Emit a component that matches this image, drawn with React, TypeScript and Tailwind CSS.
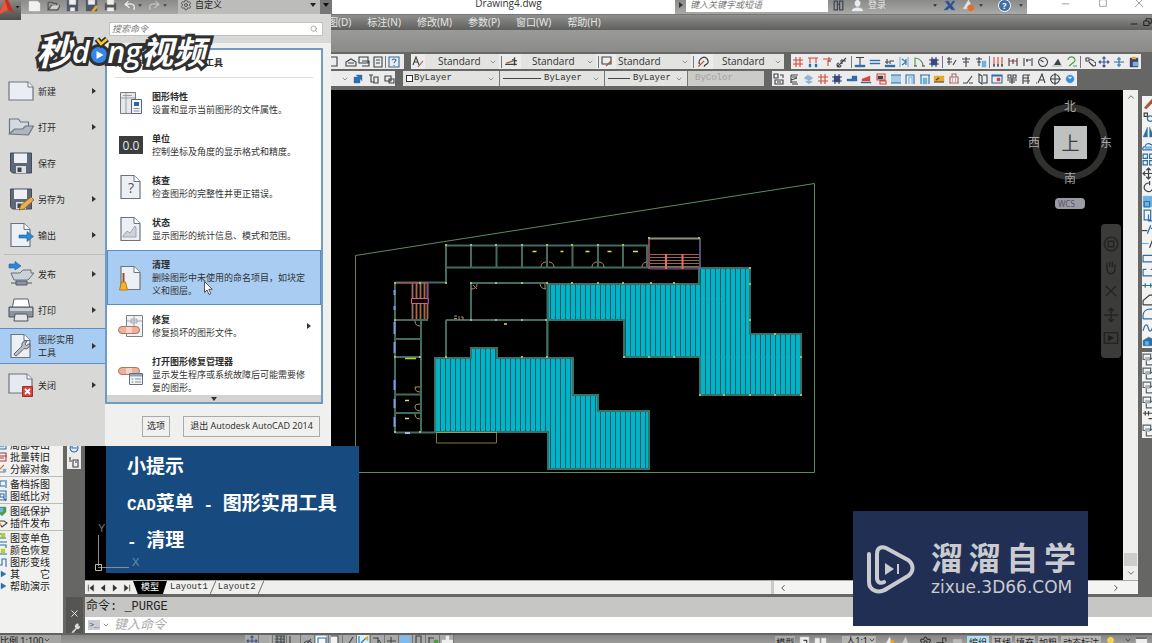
import type { ReactNode } from 'react'
import { ChevronDown, ChevronLeft, ChevronRight, ChevronUp, Search, Settings } from 'lucide-react'

type Stroke = [color: string, d: string, fill?: boolean]

const K = '#3d4348'
const R = '#d9453a'
const B = '#2d6fa8'
const S = '#6db4e4'
const G = '#4c9a4a'
const Y = '#e8a92c'

function Glyph({ strokes, className = 'size-3' }: { strokes: Stroke[]; className?: string }) {
  return (
    <svg viewBox="0 0 12 12" className={className} aria-hidden="true">
      {strokes.map(([color, d, fill], i) => (
        <path key={i} d={d} stroke={color} fill={fill ? color : 'none'} strokeWidth={fill ? 0.4 : 1.1} />
      ))}
    </svg>
  )
}

const HASH: Stroke[] = [[R, 'M4 1v10M8 1v10M1 4h10M1 8h10']]
const GRID_BLUE: Stroke[] = [['#3b4a7c', 'M3 3h6v6h-6z', true], ['#3b4a7c', 'M4 1v10M8 1v10M1 4h10M1 8h10']]
const MOVE: Stroke[] = [['#41528c', 'M6 1v10M1 6h10M4.5 2.5L6 1l1.5 1.5M4.5 9.500L6 11l1.500-1.500M2.500 4.500L1 6l1.500 1.500M9.500 4.500L11 6l-1.500 1.500']]

/* 工具栏第一行 */
const axisTools: (Stroke[] | null)[] = [
  HASH,
  [[R, 'M1 2h10M3 2v5M9 2v5'], [B, 'M2 8h2v3h-2zM8 8h2v3h-2z', true]],
  [[R, 'M1 3h9M7 1v3M6 4v6'], [K, 'M6 5h3']],
  [[K, 'M2 10L10 2M3 7a2 2 0 1 0 2 2M6 3v5M4 5h6']],
  null,
  [[K, 'M2 1.500h8M6 2v8'], [B, 'M1 9h10v2h-10z', true]],
  [[B, 'M1 4h10v1h-10zM1 7h10v1h-10z', true]],
  [[B, 'M1 9h10v2h-10z', true], [K, 'M3 8V3M6 8V5h4M1 6h4']],
  [[S, 'M2 1v10M10 1v10'], [B, 'M4 3l4 3-4 3M8 3v6']],
  [[G, 'M2 10V2a8 8 0 0 1 8 8'], [K, 'M1 10h3M9 10h3']],
  GRID_BLUE,
  null,
  [[K, 'M2 3h5M4 1v8M2 6h5M8 9l3-5']],
  [[K, 'M2 3h8M3 6h6M6 1v10']],
  [[K, 'M1 3h6M4 1v9M2 6h4'], [S, 'M7 5h4v6h-4z', true]],
  null,
  [[R, 'M2 1v7M6 1v7M10 1v7'], [K, 'M1 9h2M5 9h2M9 9h2M2 8v3M6 8v3M10 8v3']],
  [[R, 'M2 5h8'], [K, 'M2 2v8M10 2v8M6 3v5']],
  [[K, 'M2 2v8M10 2v8M4 4h5M5 3v3']],
  [[K, 'M6 1.500a4.500 4.500 0 1 0 .1 0M3.500 4l3 2']],
  [[K, 'M1 10h10M3 9l4-6 3 6M5 6h4', true]],
  [[G, 'M2 4a3.500 3 0 1 1 6 2L3 10M7 10h4']],
  null,
  [[K, 'M2 2h3v3h-3zM6 3l4 2M5 6l4 4M8 8a2 2 0 1 0 2-2']],
  MOVE,
  [[B, 'M6 1v10M1 6h10M4 3h4M4 9h4']],
  [['#4a4168', 'M2 2h8v9h-8z', true], [Y, 'M4 1h4v2h-4z', true], [S, 'M5 6h5v4h-5z', true]],
]

/* 工具栏第二行 */
const buildTools: Stroke[][] = [
  [[K, 'M1 1h4v4h-4zM2 7h8v4h-8zM7 2h3v3M4 9h4']],
  [[K, 'M3 2h7M4 4h5M3 7l6-2M3 9h6M4 11h6M3 2v8']],
  [['#8ab7d6', 'M2 5l4-3 5 3-4 3zM3 8l4 3 4-3', true]],
  HASH,
  GRID_BLUE,
  [[B, 'M6 3h5v5h-5zM1 6h6v2h-6z', true]],
  [[R, 'M2 6l8-3v5h-8z', true], [B, 'M1 9h10v1h-10z', true]],
  [[R, 'M2 1h8v6h-8zM5 8h6v3h-6z'], [K, 'M3 3h5v3h-5z', true]],
  [[S, 'M2 2v8M4 2v8M6 2v8M8 2v8M10 2v8'], [B, 'M1 2h10M1 10h10']],
  [[B, 'M2 11V2h8v9'], [S, 'M5 11V4h3v7']],
  [[B, 'M1 2h10M2 2v9M10 2v9'], [S, 'M4 5h4v6h-4z', true]],
  [[Y, 'M1 3h10v6h-10z', true], [K, 'M1 9h10M3 7l3-2']],
  [['#a86a62', 'M2 4h8v6h-8zM4 1h4v3h-4zM1 10h10M4 6h1M7 6h1M4 8h1M7 8h1']],
  [[K, 'M1 10h4l5-7M7 10h4']],
  [[K, 'M2 1v8l3 2V3zM6 2h4v8h-4']],
  [[B, 'M1 2h10v8h-10zM1 3h10'], [R, 'M6 5h3v3h-3z', true]],
  [[K, 'M2 2h3v3h-3zM7 2h3v3h-3zM1 7h10M6 5v6M3 9h6']],
  [[K, 'M3 2v9M3 2h7M3 5h6M3 8h7M8 2v9']],
  [[K, 'M3 10L7 1l3 9M5 7h4M1 10h1']],
  [[K, 'M6 1.500a4.500 4.500 0 1 0 .1 0M6 0v12M1 6h11']],
  [['#3b8fe0', 'M6 2a4 4 0 1 0 .1 0', true], ['#d8ecff', 'M4 4h4l-2 2z', true]],
]

/* 右侧修改工具栏 */
const modifyTools: Stroke[][] = [
  [['#a05a35', 'M2 10l7-8 2 2-7 7z', true]],
  [[K, 'M2 2h3v3h-3z'], [B, 'M5 7a2.500 2.500 0 1 0 5 0a2.500 2.500 0 1 0-5 0']],
  [[B, 'M5 2v9h-4zM7 2v9h4z', true]],
  [[B, 'M1 10h10a4 4 0 0 0-3-5a3 3 0 0 0-5 2a2 2 0 0 0-2 3z'], [S, 'M3 9h6v-2h-6z', true]],
  [[B, 'M1 1h4v4h-4zM7 1h4v4h-4zM1 7h4v4h-4zM7 7h4v4h-4z']],
  [[K, 'M6 1v10M1 6h10M4 3l2-2 2 2M4 9l2 2 2-2M3 4L1 6l2 2']],
  [[K, 'M7 2a4 4 0 1 0 3 4M7 0v4']],
  [[S, 'M1 1h10v10h-10z', true], [B, 'M2 6h5v5h-5z']],
  [[B, 'M2 1h6v9h-6zM6 5v6h5']],
  [[K, 'M0 7h5'], [B, 'M5 10l3-8M8 5h4']],
  [[S, 'M0 6h6'], [K, 'M7 10l3-8']],
  [[B, 'M1 4h10M1 4v6h10']],
  [[B, 'M1 4v6h10V4M1 4h3M8 4h3']],
  [[B, 'M0 6h12M3 4v4M8 4v4']],
  [[K, 'M1 11V7l6-5h5M1 11h11']],
  [[B, 'M1 11V7a6 6 0 0 1 6-5h5M1 11h11']],
  [[B, 'M1 9c2-8 4-6 5-2s3 3 5-5']],
  [[B, 'M1 5l5-3 5 2v6h-10z', true], [S, 'M3 6h3v3h-3z', true]],
]

const OVERLAP: Stroke[] = [['#5a6268', 'M1 1h7v5h-7zM4 5h7v6h-7z'], ['#a8b4bd', 'M3 4h4v3h-4z', true]]

function ToolStrip({ tools, className }: { tools: (Stroke[] | null)[]; className: string }) {
  return (
    <div className={`flex items-center bg-[#ececec] ${className}`}>
      {tools.map((tool, i) =>
        tool ? (
          <button key={i} type="button" aria-label={`工具 ${i + 1}`} className="flex flex-1 justify-center">
            <Glyph strokes={tool} />
          </button>
        ) : (
          <span key={i} className="mx-px h-3 w-px bg-[#777]" />
        ),
      )}
    </div>
  )
}

function StyleSelect({ label, value, className, pad }: { label: string; value: string; className: string; pad: string }) {
  return (
    <label className={`relative flex h-full items-center bg-[#e3e3e1] ${className}`}>
      <select
        aria-label={label}
        className={`h-full w-full appearance-none leading-[15px] text-[#333] outline-none ${pad}`}
      >
        <option>{value}</option>
      </select>
      <ChevronDown className="pointer-events-none absolute right-[2px] size-2 text-[#666]" />
    </label>
  )
}

/* 应用菜单图标 */
const Sheet = ({ children }: { children?: ReactNode }) => (
  <svg viewBox="0 0 26 26" className="size-[26px] shrink-0" aria-hidden="true">
    <path d="M3 1.500h13l6 6v17H3z" fill="#eceff3" stroke="#6d7480" strokeWidth="1.200" />
    <path d="M16 1.500v6h6" fill="#fff" stroke="#6d7480" />
    {children}
  </svg>
)

const Floppy = ({ pencil }: { pencil?: boolean }) => (
  <svg viewBox="0 0 26 26" className="size-[26px] shrink-0" aria-hidden="true">
    <path d="M2.500 3h21v20h-19l-2-2z" fill="#5d6879" stroke="#414b59" />
    <path d="M6 3.500h13V13H6z" fill="#eef0f4" />
    <path d="M8 16h10v7H8z" fill="#dde1e6" />
    <path d="M9.500 17.500h4V22h-4z" fill="#3c444f" />
    {pencil && <path d="M11 24l2-5 10-8 3 3-10 9z" fill="#e9b04c" stroke="#9a6a2a" />}
  </svg>
)

const Wide = ({ children }: { children: ReactNode }) => (
  <svg viewBox="0 0 26 26" className="size-[26px] shrink-0" aria-hidden="true">
    {children}
  </svg>
)

const mainMenu: { text: string; icon: ReactNode; arrow?: boolean; active?: boolean; divider?: boolean }[] = [
  {
    text: '新建',
    arrow: true,
    icon: (
      <Wide>
        <path d="M1 4h19l5 5v13H1z" fill="#eaedf3" stroke="#6d7480" strokeWidth="1.200" />
        <path d="M20 4v5h5" fill="#fff" stroke="#6d7480" />
      </Wide>
    ),
  },
  {
    text: '打开',
    arrow: true,
    icon: (
      <Wide>
        <path d="M1.500 20V5h9l2 3h8v5" fill="#d5dae1" stroke="#6d7480" strokeWidth="1.200" />
        <path d="M1.500 20l5-5h8l3-3h8l-5 9z" fill="#aeb6c1" stroke="#6d7480" strokeWidth="1.200" />
      </Wide>
    ),
  },
  { text: '保存', icon: <Floppy /> },
  { text: '另存为', arrow: true, icon: <Floppy pencil /> },
  {
    text: '输出',
    arrow: true,
    icon: (
      <Sheet>
        <path d="M11 13h8V9.500l6.500 5-6.500 5V16h-8z" fill="#2b87d8" stroke="#1c62a5" strokeWidth=".6" />
      </Sheet>
    ),
  },
  {
    text: '发布',
    arrow: true,
    divider: true,
    icon: (
      <Wide>
        <path d="M3 12h9l3-3h8v3h3l-6 7H6z" fill="#cbd1d8" stroke="#66707c" />
        <path d="M8 20h11v4H8zM3 22h5M19 22h5" fill="#8b96a3" stroke="#505a66" />
        <path d="M1 3h6V.5L13 5 7 9V7H1z" fill="#2b87d8" stroke="#1c62a5" strokeWidth=".6" />
      </Wide>
    ),
  },
  {
    text: '打印',
    arrow: true,
    icon: (
      <Wide>
        <path d="M6 2h14l2 10H4z" fill="#fff" stroke="#59616b" />
        <path d="M1 10h24v10H1z" fill="#8b939d" stroke="#4b535d" />
        <path d="M2 11h22v3H2z" fill="#c9ced4" />
        <path d="M7 17h12l1 7H6z" fill="#e2e6ea" stroke="#4b535d" />
      </Wide>
    ),
  },
  {
    text: '图形实用工具',
    arrow: true,
    active: true,
    icon: (
      <Sheet>
        <path d="M6 21l8-8a4 4 0 0 1 5-5l-2 3 1.500 1.500 3-2a4 4 0 0 1-5.500 5l-7 7a2 2 0 0 1-3-1.500z" fill="#b9bec5" stroke="#5d6570" />
      </Sheet>
    ),
  },
  {
    text: '关闭',
    arrow: true,
    icon: (
      <Wide>
        <path d="M1 2h18l5 5v14H1z" fill="#e6e9ee" stroke="#6d7480" strokeWidth="1.200" />
        <path d="M19 2v5h5" fill="#fff" stroke="#6d7480" />
        <path d="M14.500 14.500h10v10h-10z" fill="#d8443b" stroke="#a52c26" />
        <path d="M17 17l5 5M22 17l-5 5" stroke="#fff" strokeWidth="1.800" />
      </Wide>
    ),
  },
]

const Bandage = ({ y }: { y: number }) => (
  <g transform={`translate(0 ${y})`}>
    <rect x=".5" y=".5" width="21" height="7" rx="3.500" fill="#e9b29c" stroke="#b5745d" />
    <path d="M8 1h6v6H8z" fill="#f6d3c4" />
  </g>
)

const utilities: { title: string; desc: string; icon: ReactNode; active?: boolean; arrow?: boolean }[] = [
  {
    title: '图形特性',
    desc: '设置和显示当前图形的文件属性。',
    icon: (
      <Wide>
        <path d="M2.500 2.500h15v21h-15z" fill="#e6e7e9" stroke="#777c83" />
        <path d="M3 8h14M8 3v20M5 5.500h9" stroke="#9a9fa6" />
        <path d="M13.500 9.500h10v14h-10z" fill="#f3f7fb" stroke="#5c6671" />
        <path d="M16 12h5v4h-5z" fill="#2a64a8" />
        <path d="M15.500 18.500h6M15.500 21h6" stroke="#7f8c99" />
      </Wide>
    ),
  },
  {
    title: '单位',
    desc: '控制坐标及角度的显示格式和精度。',
    icon: (
      <span className="flex h-[18px] w-6 items-center justify-center bg-[#3c3d3f] font-['Open_Sans',sans-serif] text-[12px] text-[#e8e8e8]">
        0.0
      </span>
    ),
  },
  {
    title: '核查',
    desc: '检查图形的完整性并更正错误。',
    icon: (
      <span className="relative flex items-center justify-center">
        <Sheet />
        <span className="absolute font-['Open_Sans',sans-serif] text-[14px] text-[#4b5565]">?</span>
      </span>
    ),
  },
  {
    title: '状态',
    desc: '显示图形的统计信息、模式和范围。',
    icon: (
      <Sheet>
        <path d="M5 20l4-5 3 2 5-7 1 2v9H5z" fill="#cfd3d9" stroke="#a1a7af" />
      </Sheet>
    ),
  },
  {
    title: '清理',
    desc: '删除图形中未使用的命名项目，如块定义和图层。',
    active: true,
    icon: (
      <Sheet>
        <path d="M5.500 8v9" stroke="#a34d26" strokeWidth="2" />
        <path d="M3.500 17h4l2 8h-8z" fill="#f3b42c" stroke="#b67d12" />
      </Sheet>
    ),
  },
  {
    title: '修复',
    desc: '修复损坏的图形文件。',
    arrow: true,
    icon: (
      <Wide>
        <path d="M8.500 2.500h16v21h-16z" fill="#f1f2f4" stroke="#7b8189" />
        <path d="M9 8h15M16 3v12M13 6h6v4h-6z" stroke="#a3a8ae" fill="none" />
        <Bandage y={13} />
      </Wide>
    ),
  },
  {
    title: '打开图形修复管理器',
    desc: '显示发生程序或系统故障后可能需要修复的图形。',
    icon: (
      <Wide>
        <Bandage y={5} />
        <path d="M11.500 11.500h13v11h-13z" fill="#f2f5f8" stroke="#66707c" />
        <path d="M12 12h12v2.500H12z" fill="#8ba5bd" />
        <path d="M13.500 17h2M17 17h6M13.500 20h2M17 20h6" stroke="#7f8c99" />
      </Wide>
    ),
  },
]

const Arrow = ({ className = '' }: { className?: string }) => (
  <svg viewBox="0 0 4 6" className={`h-[6px] w-1 ${className}`} aria-hidden="true">
    <path d="M0 0l4 3-4 3z" fill="#333" />
  </svg>
)

function AppMenu() {
  return (
    <div className="absolute top-[14px] left-0 z-20 flex h-[432px] w-[331px] flex-col bg-[#d8d8d6] text-[9px] text-[#2b2b2b]">
      <div className="flex h-[29px] items-start justify-end pt-2 pr-2">
        <label className="flex h-[14px] w-[214px] items-center border border-[#c2c2c0] bg-white pr-1">
          <input placeholder="搜索命令" aria-label="搜索命令" className="min-w-0 flex-1 px-[2px] italic outline-none placeholder:text-[#777]" />
          <Search className="size-2 text-[#888]" />
        </label>
      </div>
      <div className="flex flex-1">
        <nav className="flex w-[105px] flex-col pt-[30px]">
          {mainMenu.map((item) => (
            <div key={item.text}>
              {item.divider && <hr className="my-px ml-1 border-[#bdbdbb]" />}
              <button
                type="button"
                className={
                  item.active
                    ? 'flex h-9 w-full items-center border-y border-[#5b8fc4] bg-[#a9cdf2] pl-2 text-left leading-[13px]'
                    : `flex h-9 w-full items-center pl-2 text-left leading-[13px] ${item.text === '关闭' ? 'mt-[3px]' : ''}`
                }
              >
                {item.icon}
                <span className="ml-1 w-[38px]">{item.text}</span>
                {item.arrow && <Arrow className="ml-4" />}
              </button>
            </div>
          ))}
        </nav>
        <div className="flex flex-1 flex-col bg-[#f0f0ee] pt-[5px]">
          <section className="mr-[8px] flex h-[356px] flex-col overflow-hidden border-2 border-[#6f9bc4] bg-white">
            <h2 className="mx-2 h-7 shrink-0 border-b border-[#dcdcdc] pt-[5px] text-[9px] leading-4 font-bold">
              用于维护图形的一系列工具
            </h2>
            <ul className="mt-1 min-h-0 flex-1 overflow-hidden">
              {utilities.map((item) => (
                <li key={item.title}>
                  <button
                    type="button"
                    className={`flex w-full items-center text-left leading-[13px] ${
                      item.active ? 'border border-[#5b8fc4] bg-[#a9cdf2] py-[7px] pl-[10px]' : 'py-2 pl-[11px]'
                    }`}
                  >
                    <span className="flex h-[26px] w-[26px] shrink-0 items-center justify-center">{item.icon}</span>
                    <span className="ml-2 block w-[156px] shrink-0">
                      <span className="block font-bold">{item.title}</span>
                      <span className="block text-[#333]">{item.desc}</span>
                    </span>
                    {item.arrow && <Arrow className="-ml-px" />}
                  </button>
                </li>
              ))}
            </ul>
            <div className="flex h-[7px] shrink-0 items-center justify-center bg-[#d3d3d1]">
              <svg viewBox="0 0 6 4" className="h-1 w-[6px]"><path d="M0 0h6L3 4z" fill="#333" /></svg>
            </div>
          </section>
          <div className="mr-[11px] flex flex-1 items-center justify-end gap-[13px] pt-[2px] font-['Open_Sans','Noto_Sans_CJK_SC',sans-serif]">
            <button type="button" className="h-[21px] border border-[#aaa] px-1 text-[9px]">选项</button>
            <button type="button" className="h-[21px] w-[137px] border border-[#aaa] text-[9px]">退出 Autodesk AutoCAD 2014</button>
          </div>
        </div>
      </div>
      {/* 鼠标指针 */}
      <svg viewBox="0 0 9 14" className="absolute top-[267px] left-[204px] h-[14px] w-[9px]" aria-hidden="true">
        <path d="M.5 .5v11l2.500-2.500 2 4.500 1.800-.8-2-4.400h3.500z" fill="#fff" stroke="#333" strokeWidth=".8" />
      </svg>
    </div>
  )
}

function TitleBar() {
  const tiny = 'size-[13px]'
  return (
    <header className="flex h-[14px] shrink-0 bg-gradient-to-b from-[#8b8b89] to-[#a9a9a7] text-[9px]">
      <div className="flex w-[178px] items-center gap-[6px] pb-1 pl-[28px]">
        <Glyph className={tiny} strokes={[['#f2f2f2', 'M1 2h8l2 2v7h-10z', true]]} />
        <Glyph className={tiny} strokes={[['#555', 'M1 3h4l1 1h3v2M1 10V3M1 10l3-4h8l-2 4z'], ['#cfd4da', 'M3 9l2-3h6l-2 3z', true]]} />
        <Glyph className={tiny} strokes={[['#4c5768', 'M1 1h10v10h-10z', true], ['#eee', 'M3 1h6v4h-6zM4 8h4v3h-4z', true]]} />
        <Glyph className={tiny} strokes={[['#4c5768', 'M1 1h10v10h-10z', true], ['#eee', 'M3 1h6v4h-6z', true], [Y, 'M6 11l4-5 2 1-4 5z', true]]} />
        <Glyph className={tiny} strokes={[['#555', 'M1 4h10v6h-10z', true], ['#eee', 'M3 1h6v4h-6zM3 8h6v3h-6z', true]]} />
        <Glyph className={tiny} strokes={[['#f5f5f5', 'M10 10c2-6-3-6-7-5M5 2L2 5l4 3']]} />
        <svg viewBox="0 0 6 4" className="-ml-1 h-[3px] w-1"><path d="M0 0h6L3 4z" fill="#444" /></svg>
        <Glyph className={tiny} strokes={[['#c5c5c5', 'M2 10c-2-6 3-6 7-5M7 2l3 3-4 3']]} />
        <svg viewBox="0 0 6 4" className="-ml-1 h-[3px] w-1"><path d="M0 0h6L3 4z" fill="#444" /></svg>
      </div>
      <label className="relative flex w-[142px] items-center bg-[#bcbcba] pb-1">
        <Settings className="ml-[2px] size-3 text-[#555]" />
        <select aria-label="工作空间" className="ml-[3px] flex-1 appearance-none text-[#222]">
          <option>自定义</option>
        </select>
        <svg viewBox="0 0 6 4" className="mr-1 h-1 w-[6px]"><path d="M0 0h6L3 4z" fill="#222" /></svg>
      </label>
      <div className="flex w-3 items-center justify-center bg-[#777] pb-1">
        <svg viewBox="0 0 6 4" className="h-1 w-[6px]"><path d="M0 0h6L3 4z" fill="#111" /></svg>
      </div>
      <h1 className="w-0 flex-1 bg-white pl-[10px] text-center font-['Open_Sans',sans-serif] text-[10px] leading-[6px] text-[#333]">
        Drawing4.dwg
      </h1>
      <div className="flex w-[11px] items-center justify-center pb-1"><Arrow /></div>
      <input
        aria-label="搜索"
        placeholder="键入关键字或短语"
        className="h-[12px] w-[142px] bg-white pb-[2px] pl-1 italic outline-none placeholder:text-[#777]"
      />
      <div className="flex w-[199px] items-center pb-1 text-[#e5e5e5]">
        <Glyph className="ml-1 size-[13px]" strokes={[['#3f4850', 'M2 2h3v8h-3zM7 2h3v8h-3zM5 5h2']]} />
        <Glyph className="ml-[6px] size-[13px]" strokes={[['#e8edf4', 'M6 1a2.500 3 0 1 0 .1 0M1 11c0-4 10-4 10 0z', true]]} />
        <button type="button" className="ml-1 leading-[10px]">登录</button>
        <svg viewBox="0 0 6 4" className="ml-auto h-[3px] w-1"><path d="M0 0h6L3 4z" fill="#333" /></svg>
        <Glyph className="ml-[6px] size-[13px]" strokes={[['#2c4f94', 'M2 2h3l2 3 2-3h2l-3 4 3 4h-3l-2-2-2 2h-3l4-4z', true]]} />
        <Glyph className="ml-[6px] size-[13px]" strokes={[['#dfe4ea', 'M6 1l4 8h-9z', true], ['#e0702a', 'M8 5a3 3 0 1 0 .1 0', true]]} />
        <svg viewBox="0 0 6 4" className="ml-1 h-[3px] w-1"><path d="M0 0h6L3 4z" fill="#333" /></svg>
        <span className="ml-[15px] flex size-[13px] items-center justify-center rounded-full border border-white bg-[#3f6ea5] text-[9px] leading-[9px] font-bold text-white">?</span>
        <svg viewBox="0 0 6 4" className="mr-1 ml-2 h-[3px] w-1"><path d="M0 0h6L3 4z" fill="#333" /></svg>
      </div>
      <div className="flex w-[125px] items-center justify-between bg-white pr-2 pb-[9px] pl-[34px]">
        <Glyph className="size-[10px]" strokes={[['#999', 'M1 7h9']]} />
        <Glyph className="size-[10px]" strokes={[['#999', 'M2 2h8v8h-8z']]} />
        <Glyph className="size-[10px]" strokes={[['#999', 'M1 1l10 10M11 1L1 11']]} />
      </div>
    </header>
  )
}

/* 房间隔墙 */
const walls =
  'M446 245.500H649M446 245V283M395 282.500H446M395 282V433M446 267.500H699M471 245V267M496.500 245V267M522 245V267M547 245V267M572.500 245V267M598 245V267M623 245V267M647 245V267' +
  'M471 283H547M471 283V320M547.500 283V357M446 320H547M446 320V357M395 320H428M421 320V432M395 339H421M395 357H421M395 394.500H421M395 413H421M395 432.500H435'

const stripesA = '548,284 699,284 699,268 750,268 750,334 801,334 801,395 700,395 700,357 624,357 624,320 548,320'
const stripesB =
  '435,358 471,358 471,348 497,348 497,358 573,358 573,395 598,395 598,411 649,411 649,469 548,469 548,432 435,432'

const columns: [number, number][] = [
  [446, 245], [471, 245], [496, 245], [522, 245], [547, 245], [572, 245], [598, 245], [623, 245],
  [649, 238], [699, 238], [395, 283], [420, 283], [446, 283], [471, 283], [496, 283], [522, 283],
  [547, 283], [572, 283], [598, 283], [623, 283], [651, 283], [674, 283], [395, 320], [471, 320],
  [546, 320], [395, 357], [420, 357], [446, 357], [547, 357], [624, 357], [649, 357], [674, 357],
  [750, 268], [750, 284], [750, 320], [775, 334], [801, 357], [801, 395], [775, 395], [750, 395],
  [724, 395], [700, 395], [395, 432], [420, 432], [522, 357], [496, 320], [522, 320],
]

const doors = [
  'M541 267a5 5 0 0 1 5-5M549 262a5 5 0 0 1 5 5', 'M592 267a5 5 0 0 1 5-5M599 262a5 5 0 0 1 5 5',
  'M642 267a5 5 0 0 1 5-5', 'M471 289q6 0 6-5M473 285l4 4', 'M540 284q1 5 6 5M545 284v5',
  'M420 326q-5 0-5-5M420 392q-5 0-5-5q3 0 5 0', 'M420 411q-5 0-5-5q0-2 5-2M420 419q-5 0-5-5',
]

function FloorPlan() {
  return (
    <svg viewBox="85 90 1038 489" preserveAspectRatio="xMinYMin meet" className="h-full w-full" role="img" aria-label="平面图">
      <defs>
        <pattern id="stripes" width="5" height="10" patternUnits="userSpaceOnUse">
          <rect width="5" height="10" fill="#03b4c9" />
          <rect width="1" height="10" fill="#035d69" />
        </pattern>
      </defs>
      <path d="M355.500 255.500L814.500 183.500V472.500H355.500z" fill="none" stroke="#5d8a64" />
      <path d={walls} fill="none" stroke="#426c60" strokeWidth="2" />
      <path d="M547 357V320.500H624" fill="none" stroke="#48796a" />
      <polygon points={stripesA} fill="url(#stripes)" stroke="#3b7068" strokeWidth="2" />
      <polygon points={stripesB} fill="url(#stripes)" stroke="#3b7068" strokeWidth="2" />
      <path d="M548 320h176M624 357h176M700 299h25" stroke="#1fa09b" strokeDasharray="2 3" opacity=".6" />
      <path d="M436.500 433v10h60v-10" fill="none" stroke="#8c762d" />
      <path d="M436 432.500h61" stroke="#9ca04b" />
      {/* 楼梯 */}
      <path d="M649 238.500h51" stroke="#8c9382" strokeWidth="2" />
      <path d="M700 238v31" stroke="#6e6aa5" strokeWidth="1.500" />
      <path d="M649 238v31" stroke="#b45570" strokeWidth="1.500" />
      <path d="M650 254.500h49M650 257.500h49M650 260.500h49M650 263.500h49M650 266.500h49" stroke="#9a6450" />
      <path d="M650 269h49" stroke="#93458b" />
      <path d="M666 254v15M682.500 254v15" stroke="#ef6b5b" strokeWidth="2" />
      <path d="M395 283h33" stroke="#c55a5c" />
      <path d="M412.500 283v36M416.500 283v36M420.500 283v36M424.500 283v36M427.500 283v36" stroke="#a8694f" strokeWidth="1.800" />
      <path d="M411.500 298.500h17v5h-17z" fill="#000" stroke="#e35c83" />
      <path d="M428 283v21" stroke="#653d9e" />
      <path d="M394.500 290v5M394.500 306v4M394.500 322v12M394.500 342v11M394.500 380v10M394.500 399v9M394.500 417v10" stroke="#7d9be0" strokeWidth="2" />
      <path d="M405 433h5" stroke="#8fbfe8" strokeWidth="2" />
      {doors.map((d) => (
        <path key={d} d={d} fill="none" stroke="#b78a66" />
      ))}
      <path d="M454 316h3M454 318.500h3M459 316v4M461 317h2v3" stroke="#b58b73" fill="none" />
      {columns.map(([x, y]) => (
        <rect key={`${x}-${y}`} x={x - 1} y={y - 1} width="2" height="2" fill="#a9b86b" />
      ))}
      <path d="M532.500 251.500h4M560.500 251.500h3M585.500 251.500h4M607.500 251.500h4M633 251.500h5M504 324h3M405 400.500h4M405 418.500h4" stroke="#e3dc5c" strokeWidth="1.500" />
      <path d="M405 358.500h11" stroke="#b9dc25" strokeWidth="1.500" />
    </svg>
  )
}

function ViewCube() {
  return (
    <div className="absolute top-[10px] right-[11px] w-[84px] text-[12px] leading-[14px] text-[#a6a6a6]">
      <div className="relative h-[84px]">
        <div className="absolute top-1 left-[4px] size-[76px] rounded-full border-[7px] border-[#30302f]" />
        <span className="absolute top-0 left-[36px]">北</span>
        <span className="absolute top-[72px] left-[36px]">南</span>
        <span className="absolute top-[36px] left-0">西</span>
        <span className="absolute top-[36px] right-0">东</span>
        <button type="button" className="absolute top-[26px] left-[26px] size-[33px] bg-[#bfc1c0] text-[18px] text-[#3a4146]">
          上
        </button>
      </div>
      <button type="button" className="mt-[14px] ml-[27px] block h-[11px] w-[30px] rounded-sm bg-[#9b9ba5] pl-[3px] text-left text-[8px] leading-[11px] text-[#55555f]">
        WCS
      </button>
    </div>
  )
}

function NavBar() {
  const ink = '#242423'
  return (
    <div className="absolute top-[134px] right-[2px] flex h-[134px] w-5 flex-col items-center justify-around rounded-sm bg-[#3b3b39] py-2">
      <Glyph className="size-4" strokes={[[ink, 'M6 1a5 5 0 1 0 .1 0M4 4h4v4h-4z']]} />
      <Glyph className="size-4" strokes={[[ink, 'M3 7V3M5 6V2M7 6V2M9 7V4M3 7c0 6 6 5 6 0']]} />
      <Glyph className="size-4" strokes={[[ink, 'M2 2l8 8M10 2L2 10M5 6h2']]} />
      <Glyph className="size-4" strokes={[[ink, 'M6 1v10M1 6h10M4 3l2-2 2 2M4 9l2 2 2-2']]} />
      <Glyph className="size-4" strokes={[[ink, 'M1 2h10v8h-10z'], ['#1c1c1c', 'M4 4l4 2-4 2z', true]]} />
    </div>
  )
}

/* 左侧插件工具条 */
const plugins: { text: string; strokes: Stroke[]; divider?: boolean }[] = [
  { text: '局部导出', strokes: [[B, 'M1 2h9v8h-9z'], [S, 'M3 4h5v4h-5z', true]] },
  { text: '批量转旧', strokes: [['#a13b41', 'M2 2h8v8h-8zM1 5h10M4 7h4']] },
  { text: '分解对象', strokes: [['#d4622c', 'M2 8l6-6M3 3v6h6'], [S, 'M7 6h3v3h-3z', true]] },
  { text: '备档拆图', divider: true, strokes: [[B, 'M1 3h8M1 8h8M4 3v5M10 2v8']] },
  { text: '图纸比对', strokes: [[B, 'M2 1h8v9h-8zM4 4h4v3h-4zM7 7l3 4']] },
  { text: '图纸保护', divider: true, strokes: [[G, 'M2 2h8v5l-4 4-4-4z', true], [S, 'M4 3h3v4h-3z', true]] },
  { text: '插件发布', strokes: [[K, 'M1 4h7l3 2-5 4-2-3z'], [Y, 'M2 6h3v2h-3z', true]] },
  { text: '图变单色', divider: true, strokes: [['#b6cf2e', 'M5 1h4v4h-4z', true], [B, 'M1 2h4M1 6h9M3 10h8']] },
  { text: '颜色恢复', strokes: [['#b6cf2e', 'M5 5h4v4h-4z', true], [B, 'M1 1h9v3M2 5v5h9']] },
  { text: '图形变线', strokes: [[B, 'M2 1v8h4V3h4v8']] },
  { text: '其　　它', strokes: [[B, 'M5 3l5 3-5 3z', true]] },
  { text: '帮助演示', strokes: [[B, 'M5 3l5 3-5 3z', true]] },
]

const statusIcons: Stroke[][] = [
  MOVE,
  [['#bbb', 'M1 9h9V2']],
  [[K, 'M1 1h10M1 4h10M1 7h10M3 1v9M7 1v9M10 1v9']],
  [[K, 'M2 1v9h9']],
  [[K, 'M2 10a4 4 0 1 1 8 0M4 10l5-6']],
  [['#f7f7f7', 'M1 1h10v10h-10z', true], [B, 'M3 3h8v8h-8z']],
  [['#f2f2f2', 'M2 1h7v10h-7z', true], [K, 'M2 1h7v10']],
  [[K, 'M2 9l3 1 5-8']],
  [['#d8f0fb', 'M0 0h12v12h-12z', true], [B, 'M2 1v9h9M4 8l5-5'], [Y, 'M8 3l3-2v5z', true]],
  [[K, 'M2 3h5v5M6 3l4 5']],
  [[K, 'M6 2v8M2 6h9']],
  [['#7ebbf0', 'M1 1h10v9h-10z', true]],
  [[K, 'M3 1h5v9h-5z']],
  [[K, 'M2 2v8M2 3h5'], [G, 'M7 5h4v4h-4z', true]],
  [['#eee', 'M5 1h3v4h4v3h-4v4h-3V8H1V5h4z', true]],
]

function StatusBar() {
  return (
    <footer className="flex h-[10px] shrink-0 items-start overflow-hidden border-t-2 border-[#636363] bg-gradient-to-b from-[#858583] to-[#9b9b99] text-[9px] leading-[10px] text-[#222]">
      <button type="button" className="mr-auto flex w-[61px] shrink-0 items-start bg-[#a5a5a3] pt-px whitespace-nowrap">
        比例 1:100
        <ChevronDown className="size-2" />
      </button>
      <div className="mr-[321px] flex w-[209px] shrink-0 bg-[#a9a9a7]">
        {statusIcons.map((strokes, i) => (
          <button key={i} type="button" aria-label={`状态 ${i + 1}`} className="flex flex-1 justify-center border-r border-[#777]">
            <Glyph strokes={strokes} />
          </button>
        ))}
      </div>
      <div className="flex shrink-0 gap-[3px] pt-px">
        <button type="button" className="w-5 bg-[#a9a9a7]">模型</button>
        <Glyph className="size-[13px]" strokes={[['#eee', 'M2 1h8v10h-8z', true], [K, 'M5 4h3v3']]} />
        <Glyph className="size-[13px]" strokes={[['#eee', 'M1 2h4v8h-4zM7 2h4v8h-4z', true]]} />
        <span className="ml-3 flex bg-[#b5b5b3] pl-1">人1:1<ChevronDown className="size-2" /></span>
        <Glyph className="ml-1 size-[13px]" strokes={[['#e8edf0', 'M2 9l4-8 3 8z', true], [Y, 'M7 4h3v3h-3z', true]]} />
        <Glyph className="size-[13px]" strokes={[['#ccc', 'M2 9l4-8 3 8z', true]]} />
        <Settings className="ml-1 size-[13px] text-[#333]" />
        <Glyph className="size-[13px]" strokes={[['#444', 'M2 6h6v5h-6zM7 6V2h3v3']]} />
        <Glyph className="size-[13px]" strokes={[['#bbb', 'M2 3h8v7h-8z', true]]} />
        <button type="button" className="w-[22px] bg-[#b5dff0]">编组</button>
        <button type="button" className="w-[20px] bg-[#b5b5b3]">基线</button>
        <button type="button" className="w-[20px] bg-[#b5b5b3]">填充</button>
        <button type="button" className="w-[20px] bg-[#b5b5b3]">加粗</button>
        <button type="button" className="w-[40px] bg-[#b5b5b3]">动态标注</button>
        <Glyph className="size-[13px]" strokes={[['#f5d24c', 'M6 1a3 3 0 1 0 .1 0M4 8h4v2h-4z', true]]} />
        <ChevronDown className="ml-1 size-2" />
        <Glyph className="mr-1 size-[13px]" strokes={[['#eee', 'M1 2h10v9h-10z', true], [K, 'M1 2h10']]} />
      </div>
    </footer>
  )
}

function Tips() {
  const latin = "font-['Liberation_Mono',monospace] text-[16px] leading-4 whitespace-pre"
  return (
    <aside className="absolute top-[446px] left-[106px] z-10 h-[127px] w-[253px] bg-[#174b7f] px-[21px] pt-[2px] text-[19px] leading-[37px] font-bold text-white">
      <p className="h-[37px]">小提示</p>
      <p className="h-[37px] whitespace-nowrap">
        <span className={latin}>CAD</span>菜单
        <span className={latin}> - </span>图形实用工具
      </p>
      <p className="h-[37px]">
        <span className={latin}>- </span>清理
      </p>
    </aside>
  )
}

function VideoLogo() {
  return (
    <div className="absolute top-[32px] left-[36px] z-30 flex h-10 items-center font-bold text-white italic [paint-order:stroke_fill] [-webkit-text-stroke:6px_#303030]">
      <span className="text-[36px] leading-10">秒</span>
      <span className="font-['Open_Sans',sans-serif] text-[30px] leading-10 font-semibold">d</span>
      <svg viewBox="0 0 18 32" className="h-8 w-[18px] overflow-visible" aria-hidden="true">
        <circle cx="9" cy="19" r="11" fill="#303030" />
        <circle cx="9" cy="19" r="8" fill="#3286ee" />
        <path d="M6.500 15l7 4-7 4z" fill="#fff" />
        <path d="M7 3l4 5 6-5" fill="none" stroke="#303030" strokeWidth="6" />
        <path d="M7 3l4 5 6-5" fill="none" stroke="#f4cd26" strokeWidth="2.500" />
      </svg>
      <span className="font-['Open_Sans',sans-serif] text-[30px] leading-10 font-semibold">ng</span>
      <span className="text-[32px] leading-10">视频</span>
    </div>
  )
}

function SiteMark() {
  return (
    <div className="absolute right-[64px] bottom-[17px] z-30 flex h-[115px] w-[235px] items-center bg-[#222f55] pl-[14px] text-[#c9cbce]">
      <svg viewBox="0 0 48 50" className="h-[50px] w-12" fill="none" stroke="#c9cbce" strokeWidth="4" strokeLinecap="round" aria-hidden="true">
        <path d="M17 38c-4 2-7 0-7-4V10c0-6 4-8 9-6l22 12c6 4 6 12 0 16L21 44C11 51 2 46 2 38V10" />
        <path d="M18 19l9 6-9 6z" fill="#c9cbce" stroke="none" />
        <path d="M31 20v10" strokeWidth="2" strokeLinecap="butt" />
      </svg>
      <div className="ml-[16px] w-[145px]">
        <div className="flex justify-between text-[32px] leading-[32px] font-bold">
          <span>溜</span>
          <span>溜</span>
          <span>自</span>
          <span>学</span>
        </div>
        <div className="mt-1 font-['DejaVu_Sans',sans-serif] text-[17px] leading-[18px]">zixue.3D66.COM</div>
      </div>
    </div>
  )
}

export default function App() {
  return (
    <div className="relative flex h-screen flex-col overflow-hidden bg-[#666664] font-['Noto_Sans','Noto_Sans_CJK_SC',sans-serif]">
      <TitleBar />
      <nav className="flex h-4 shrink-0 items-center gap-4 border-t border-[#777] bg-gradient-to-b from-[#8f8f8d] to-[#5f5f5d] pl-[328px] text-[10px] text-[#e6e6e6]">
        <button type="button">图(D)</button>
        <button type="button">标注(N)</button>
        <button type="button">修改(M)</button>
        <button type="button">参数(P)</button>
        <button type="button">窗口(W)</button>
        <button type="button">帮助(H)</button>
        <span className="ml-auto flex gap-1">
          <Glyph className="size-[9px]" strokes={[['#111', 'M1 8h9']]} />
          <Glyph className="size-[9px]" strokes={[['#111', 'M1 4h7v6h-7zM4 4V1h7v6h-3']]} />
        </span>
      </nav>
      <div className="h-[22px] shrink-0 bg-gradient-to-b from-[#9a9a98] to-[#8a8a88]" />

      <div className="mt-[2px] flex h-[15px] shrink-0 pl-[331px]">
        <div className="mr-[7px] flex w-[73px] items-center justify-between bg-[#ececec] pr-1">
          <Glyph strokes={[[K, 'M0 1h6v9h-6']]} />
          <Glyph strokes={[[K, 'M1 6l5-3 5 3v4h-10zM3 7h6']]} />
          <Glyph strokes={[[K, 'M1 1h9v6h-9zM4 5h7v5h-7']]} />
          <Glyph strokes={[[K, 'M2 1h8v10h-8zM4 4h4M4 7h4']]} />
          <span className="h-3 w-px bg-[#777]" />
          <Glyph strokes={[[B, 'M1 1h10v10h-10zM4 4q2-2 4 0l-2 3M6 9v1']]} />
        </div>
        <div className="mr-[7px] flex w-[373px] items-center bg-[#ececec] font-['Open_Sans',sans-serif] text-[10px]">
          <Glyph className="mr-px ml-px size-3" strokes={[[K, 'M1 9L4 1l3 8M2 6h4'], ['#a05a35', 'M6 11l5-6', false]]} />
          <StyleSelect label="文字样式" value="Standard" className="w-[74px]" pad="pl-[13px]" />
          <span className="ml-[2px] h-3 w-px bg-[#777]" />
          <Glyph className="mr-[3px] ml-[2px] size-[14px]" strokes={[[K, 'M1 8h10M7 4l4 1M9 2v7'], ['#a05a35', 'M2 7l6-2', false]]} />
          <StyleSelect label="标注样式" value="Standard" className="w-[75px]" pad="pl-[11px]" />
          <span className="ml-[2px] h-3 w-px bg-[#777]" />
          <Glyph className="mr-[3px] ml-[2px] size-3" strokes={[[K, 'M1 1h9v7h-9z'], ['#a05a35', 'M5 10l5-5', false]]} />
          <StyleSelect label="表格样式" value="Standard" className="w-[75px]" pad="pl-[2px]" />
          <span className="ml-[2px] h-3 w-px bg-[#777]" />
          <Glyph className="mr-[3px] ml-[2px] size-[14px]" strokes={[[K, 'M3 8c-2-4 5-9 7-4s-3 3-3 6'], ['#a05a35', 'M2 10l5-5', false]]} />
          <StyleSelect label="多重引线样式" value="Standard" className="flex-1" pad="pl-[9px]" />
        </div>
        <ToolStrip tools={axisTools} className="w-[350px]" />
      </div>

      <div className="mt-[2px] mb-1 flex h-[15px] shrink-0 pl-[331px]">
        <div className="mr-2 flex w-[64px] items-center justify-between bg-[#ececec] pl-[10px]">
          <ChevronDown className="size-2 text-[#666]" />
          <Glyph strokes={[[B, 'M2 4h6v6h-6zM4 2h6v6', true]]} />
          <Glyph strokes={[[K, 'M1 2h4M3 2v7h3M6 4h4v6h-4z']]} />
          <Glyph strokes={[[K, 'M2 3h6v5h-6zM6 6h5v4h-5z']]} />
        </div>
        <div className="flex w-[361px] items-center gap-[2px] bg-[#e3e3e1] font-['Liberation_Mono',monospace] text-[9px]">
          <div className="flex h-full items-center">
            <span className="ml-[3px] size-[7px] border border-[#333] bg-white" />
            <StyleSelect label="颜色" value="ByLayer" className="w-[84px]" pad="pl-px" />
          </div>
          <div className="flex h-full items-center border-l border-[#777] pl-[3px]">
            <span className="h-px w-[38px] bg-[#444]" />
            <StyleSelect label="线型" value="ByLayer" className="w-[61px]" pad="pl-[3px]" />
          </div>
          <div className="flex h-full items-center border-l border-[#777] pl-[3px]">
            <span className="h-px w-[22px] bg-[#444]" />
            <StyleSelect label="线宽" value="ByLayer" className="w-[55px]" pad="pl-[3px]" />
          </div>
          <div className="flex h-full flex-1 items-center border-l border-[#777] bg-[#cbcbc9] pl-[7px] text-[#a2a2a0]">ByColor</div>
        </div>
        <ToolStrip tools={buildTools} className="ml-2 w-[305px]" />
      </div>

      <div className="flex min-h-0 flex-1">
        <aside className="flex w-[63px] shrink-0 flex-col justify-end overflow-hidden bg-[#f1f1f0] pb-[41px] text-[10px] leading-[12px] text-[#222]">
          {plugins.map((item) => (
            <div key={item.text}>
              {item.divider && <hr className="my-px border-[#bbb]" />}
              <button type="button" className="flex h-3 items-center gap-[2px] whitespace-nowrap">
                <Glyph className="-ml-1 size-3" strokes={item.strokes} />
                {item.text}
              </button>
            </div>
          ))}
        </aside>

        <div className="flex min-w-0 flex-1 flex-col">
          <div className="flex min-h-0 flex-1">
            <div className="w-[22px] shrink-0 pl-1">
              <div className="flex h-[379px] w-[14px] flex-col items-center justify-end gap-[2px] bg-[#ececec] pb-px">
                <Glyph strokes={[[B, 'M6 2a4 4 0 1 0 .1 0M4 1v5h5']]} />
                <Glyph strokes={[[K, 'M2 1v3M1 5h3M5 4h5v7h-5zM7 6h2']]} />
              </div>
            </div>
            <div className="flex min-w-0 flex-1 flex-col">
              <div className="flex min-h-0 flex-1">
                <main className="relative min-w-0 flex-1 overflow-hidden bg-black">
                  <FloorPlan />
                  <ViewCube />
                  <NavBar />
                </main>
                <div className="flex w-[15px] flex-col items-center bg-[#efefee] text-[#555]">
                  <ChevronUp className="mt-[2px] size-[10px]" />
                  <div className="mt-auto h-[13px] w-[13px] bg-[#cdcdcc]" />
                  <ChevronDown className="my-[2px] size-[10px]" />
                </div>
              </div>
              <div className="flex h-[14px] shrink-0 items-stretch border-t border-[#aaa] bg-[#efefee] font-['Liberation_Mono','Noto_Sans_CJK_SC',monospace] text-[9px] text-[#333]">
                <div className="flex w-12 items-center justify-around">
                  <Glyph className="size-2" strokes={[['#333', 'M2 1v10'], ['#333', 'M10 1v10l-6-5z', true]]} />
                  <Glyph className="size-2" strokes={[['#333', 'M9 1v10l-6-5z', true]]} />
                  <Glyph className="size-2" strokes={[['#333', 'M3 1v10l6-5z', true]]} />
                  <Glyph className="size-2" strokes={[['#333', 'M10 1v10'], ['#333', 'M2 1v10l6-5z', true]]} />
                </div>
                <button type="button" className="w-[34px] bg-black leading-3 text-white [clip-path:polygon(0_0,100%_0,88%_100%,14%_100%)]">模型</button>
                <button type="button" className="ml-[3px]">Layout1</button>
                <svg viewBox="0 0 6 14" className="mx-[2px] w-[6px]"><path d="M0 14L6 0" stroke="#666" /></svg>
                <button type="button">Layout2</button>
                <svg viewBox="0 0 6 14" className="mx-[2px] w-[6px]"><path d="M0 14L6 0" stroke="#666" /></svg>
                <div className="ml-auto flex w-[367px] items-center bg-[#f4f4f3]">
                  <span className="h-full w-[3px] bg-[#c9c9c8]" />
                  <ChevronLeft className="ml-1 size-[10px]" />
                  <ChevronRight className="mr-[17px] ml-auto size-[10px]" />
                </div>
              </div>
            </div>
            <div className="flex w-[14px] shrink-0 flex-col overflow-hidden pt-[6px] pl-1">
              <div className="flex h-[252px] flex-col items-start justify-around bg-[#f3f3f2]">
                {modifyTools.map((strokes, i) => (
                  <Glyph key={i} className="size-[13px] shrink-0" strokes={strokes} />
                ))}
              </div>
              <div className="mt-1 flex h-[86px] flex-col items-start justify-around bg-[#f3f3f2]">
                {[0, 1, 2, 3].map((i) => (
                  <Glyph key={i} className="size-[13px] shrink-0" strokes={OVERLAP} />
                ))}
                <Glyph className="size-[13px] shrink-0" strokes={[[K, 'M1 3h10M3 1v4M6 1v4M6 8h4v3']]} />
                <Glyph className="size-[13px] shrink-0" strokes={OVERLAP} />
              </div>
            </div>
          </div>

          <div className="mt-[3px] flex h-[36px] shrink-0 pl-[3px]">
            <div className="flex w-[17px] flex-col items-center justify-end gap-[5px] bg-[#555553]">
              <Glyph className="size-[9px]" strokes={[['#fff', 'M2 2l8 8M10 2L2 10']]} />
              <Glyph className="size-[10px]" strokes={[['#ddd', 'M2 11l5-5a3 3 0 0 1 3-5v3h2a3 3 0 0 1-4 3l-4 5z', true]]} />
            </div>
            <div className="ml-[2px] flex min-w-0 flex-1 flex-col bg-white text-[12px]">
              <output className="h-[20px] bg-[#c6c6c4] pl-px font-['Liberation_Mono','Noto_Sans_CJK_SC',monospace] leading-[20px] text-[#222]">
                命令: _PURGE
              </output>
              <label className="flex h-4 items-center">
                <span className="ml-[3px] flex h-[10px] w-3 items-center justify-center bg-[#c9cdd4] font-['Liberation_Mono',monospace] text-[8px] text-[#444]">&gt;_</span>
                <ChevronDown className="ml-[2px] size-2 text-[#666]" />
                <input
                  aria-label="命令行"
                  placeholder="键入命令"
                  className="ml-1 h-4 flex-1 text-[13px] italic outline-none placeholder:text-[#aaa]"
                />
              </label>
            </div>
          </div>
        </div>
      </div>

      <StatusBar />
      <AppMenu />
      <button type="button" aria-label="应用程序菜单" className="absolute top-0 left-0 z-30 flex h-5 w-[21px] items-start bg-gradient-to-b from-[#8a8a88] to-[#4d4d4b]">
        <svg viewBox="0 0 21 20" className="h-5 w-[21px]">
          <path d="M0 12L5 0h3l6 13-6-3-8 4z" fill="#c7301f" />
          <path d="M5 0l3 10-8 4v-3z" fill="#e8553c" />
          <path d="M15.500 6h4l-2 2.500z" fill="#222" />
        </svg>
      </button>
      <Tips />
      <svg viewBox="0 0 50 54" className="absolute bottom-[68px] left-[92px] z-10 h-[54px] w-[50px]" fill="none" aria-label="坐标系">
        <path d="M6.500 14v31" stroke="#8f8f86" />
        <path d="M6 46.500h31" stroke="#7f8f98" />
        <path d="M3.500 43.500h6v6h-6z" stroke="#c9b99c" />
        <text x="6" y="11" fontSize="11" fill="#77776f" className="font-['Liberation_Sans',sans-serif]">Y</text>
        <text x="40" y="45" fontSize="11" fill="#6b90ad" className="font-['Liberation_Sans',sans-serif]">X</text>
      </svg>
      <VideoLogo />
      <SiteMark />
    </div>
  )
}
